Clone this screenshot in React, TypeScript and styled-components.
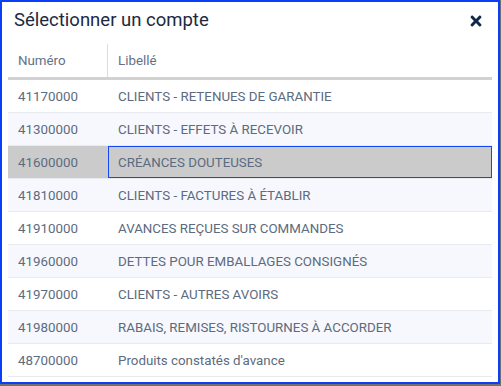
import { FC } from 'react';
import styled, { createGlobalStyle } from 'styled-components';
import { FaTimes } from 'react-icons/fa';

const GlobalStyle = createGlobalStyle`
  html, body {
    margin: 0;
    padding: 0;
    background: #6f7072;
    font-family: Roboto, 'Liberation Sans', sans-serif;
  }
`;

const Dialog = styled.div`
  box-sizing: border-box;
  width: 500px;
  height: 384px;
  border: 2px solid #0d3ef7;
  background: #ffffff;
  display: flex;
  flex-direction: column;
  overflow: hidden;
`;

const TitleBar = styled.div`
  height: 36px;
  margin-bottom: 6px;
  padding: 0 14px 0 12px;
  display: flex;
  align-items: center;
  justify-content: space-between;
`;

const Title = styled.h1`
  margin: 0;
  font-size: 18.5px;
  font-weight: 400;
  color: #1c2a3e;
`;

const CloseButton = styled.button`
  border: none;
  background: none;
  padding: 0;
  margin-top: 1px;
  display: flex;
  color: #0f2847;
  cursor: pointer;
`;

const Table = styled.div`
  margin: 0 6px;
  display: flex;
  flex-direction: column;
`;

const HeadRow = styled.div`
  display: grid;
  grid-template-columns: 100px 1fr;
  height: 33px;
  border-bottom: 3px solid #d2d2d2;
`;

const HeadCell = styled.div<{ $divider?: boolean }>`
  display: flex;
  align-items: center;
  padding-left: 10px;
  font-size: 13.33px;
  color: #62718a;
  border-right: ${(p) => (p.$divider ? '1px solid #dcdcdc' : 'none')};
`;

const Row = styled.div<{ $alt: boolean; $selected: boolean }>`
  display: grid;
  grid-template-columns: 100px 1fr;
  height: 32px;
  border-bottom: 1px solid #e9eaef;
  background: ${(p) => (p.$selected ? '#cbcbcb' : p.$alt ? '#f7f8fd' : '#ffffff')};
`;

const Cell = styled.div<{ $focused?: boolean }>`
  box-sizing: border-box;
  display: flex;
  align-items: center;
  padding-left: ${(p) => (p.$focused ? '9px' : '10px')};
  font-size: 13.33px;
  color: #5c6b80;
  white-space: nowrap;
  border: ${(p) => (p.$focused ? '1px solid #1448f2' : 'none')};
`;

const accounts = [
  { num: '41170000', label: 'CLIENTS - RETENUES DE GARANTIE' },
  { num: '41300000', label: 'CLIENTS - EFFETS À RECEVOIR' },
  { num: '41600000', label: 'CRÉANCES DOUTEUSES' },
  { num: '41810000', label: 'CLIENTS - FACTURES À ÉTABLIR' },
  { num: '41910000', label: 'AVANCES REÇUES SUR COMMANDES' },
  { num: '41960000', label: 'DETTES POUR EMBALLAGES CONSIGNÉS' },
  { num: '41970000', label: 'CLIENTS - AUTRES AVOIRS' },
  { num: '41980000', label: 'RABAIS, REMISES, RISTOURNES À ACCORDER' },
  { num: '48700000', label: "Produits constatés d'avance" },
];

const selected = '41600000';

const App: FC = () => {
  return (
    <>
      <GlobalStyle />
      <Dialog>
        <TitleBar>
          <Title>Sélectionner un compte</Title>
          <CloseButton aria-label="Fermer">
            <FaTimes size={16} />
          </CloseButton>
        </TitleBar>
        <Table>
          <HeadRow>
            <HeadCell $divider>Numéro</HeadCell>
            <HeadCell>Libellé</HeadCell>
          </HeadRow>
          {accounts.map((a, i) => {
            const isSel = a.num === selected;
            return (
              <Row key={a.num} $alt={i % 2 === 1} $selected={isSel}>
                <Cell>{a.num}</Cell>
                <Cell $focused={isSel}>{a.label}</Cell>
              </Row>
            );
          })}
        </Table>
      </Dialog>
    </>
  );
};

export default App;
